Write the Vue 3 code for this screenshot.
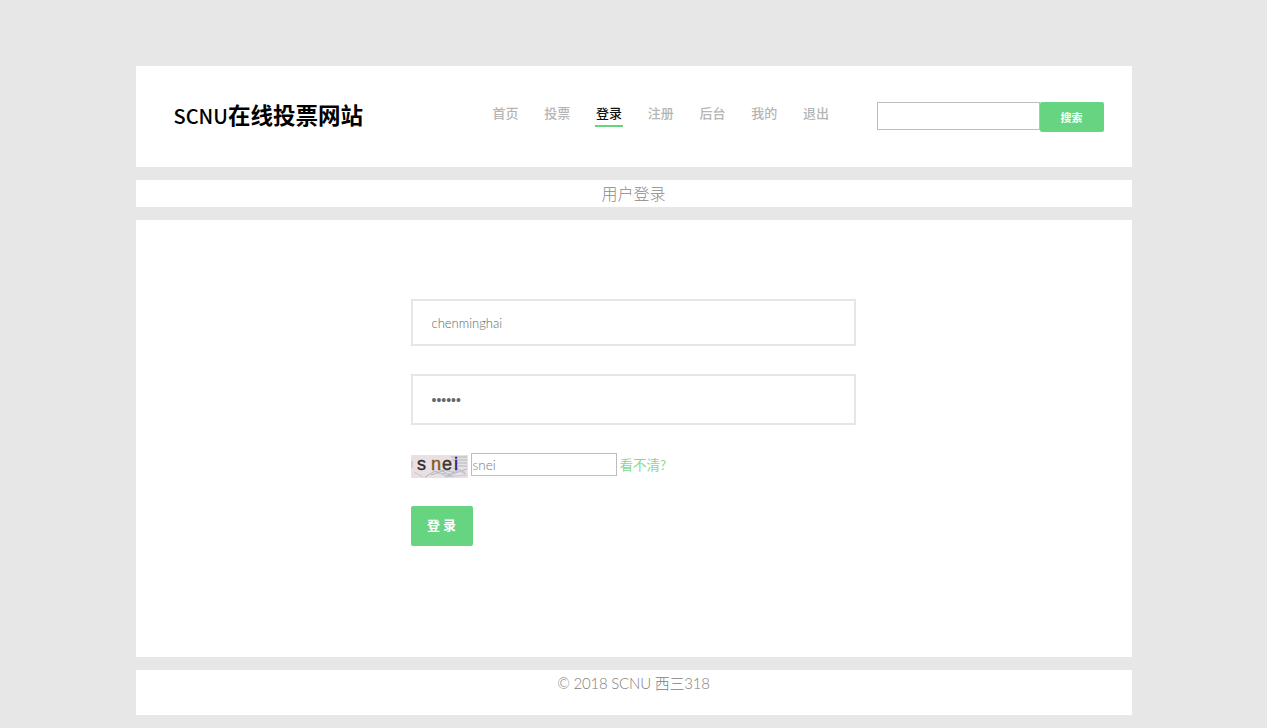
<template>
  <div class="page">
    <header class="panel top-bar">
      <h1 class="logo">SCNU<span>在线投票网站</span></h1>
      <nav class="nav">
        <a v-for="item in navItems" :key="item" :class="['nav-link', { active: item === '登录' }]">{{ item }}</a>
      </nav>
      <div class="search">
        <input class="search-input" type="text" />
        <button class="search-btn">搜索</button>
      </div>
    </header>

    <div class="panel title-bar">用户登录</div>

    <main class="panel login">
      <form class="login-form" @submit.prevent>
        <input class="field field-name" type="text" v-model="username" />
        <input class="field field-pass" type="password" v-model="password" />
        <div class="captcha-row">
          <svg class="captcha" width="57" height="23" viewBox="0 0 57 23">
            <rect width="57" height="23" fill="#eadfe3" />
            <path d="M1 6v7M40 2h16M41 5h15M44 8h12M47 11h9M20 20l14-5 10 3 12-4M14 22l10-6 12 5 8-3M28 14l14 8M46 13l8 6" stroke="#a3adb9" stroke-width="1" fill="none" opacity=".8" />
            <path d="M3 17l9 5M36 16l18 1M34 22l22-2M24 18l20 1M38 12l17 6" stroke="#c2cad3" stroke-width="1" fill="none" />
            <text x="6" y="15" class="cap-char" fill="#2b2b33" stroke="#2b2b33">s</text>
            <text x="20" y="15" class="cap-char" fill="#7a5a2c" stroke="#7a5a2c">n</text>
            <text x="31" y="15" class="cap-char" fill="#3b3a2e" stroke="#3b3a2e">e</text>
            <text x="43" y="15" class="cap-char" fill="#23266e" stroke="#23266e">i</text>
          </svg>
          <input class="captcha-input" type="text" v-model="captcha" />
          <a class="captcha-link">看不清?</a>
        </div>
        <button class="login-btn">登 录</button>
      </form>
    </main>

    <footer class="panel footer">© 2018 SCNU 西三318</footer>
  </div>
</template>

<script setup>
import { ref } from 'vue'

const navItems = ['首页', '投票', '登录', '注册', '后台', '我的', '退出']
const username = ref('chenminghai')
const password = ref('123456')
const captcha = ref('snei')
</script>

<style>
html,
body {
  margin: 0;
  background: #e7e7e7;
}
</style>

<style scoped>
.page {
  width: 996px;
  margin: 0 auto;
  padding: 66px 0 13px;
  display: flex;
  flex-direction: column;
  gap: 13px;
  font-family: Lato, "Noto Sans CJK SC", sans-serif;
  font-weight: 300;
  color: #777;
}

.panel {
  background: #fff;
}

.top-bar {
  height: 101px;
  box-sizing: border-box;
  padding: 0 28px 0 38px;
  display: flex;
  align-items: center;
}

.logo {
  margin: -3px 0 0;
  width: 319px;
  flex-shrink: 0;
  font-family: "Noto Sans CJK SC", sans-serif;
  font-size: 20px;
  font-weight: 500;
  line-height: 32px;
  color: #000;
}

.logo span {
  font-size: 22.5px;
  font-weight: 700;
}

.nav {
  display: flex;
  flex-shrink: 0;
  gap: 25.75px;
  margin-top: -3px;
}

.nav-link {
  font-family: "Noto Sans CJK SC", sans-serif;
  font-size: 13px;
  font-weight: 500;
  line-height: 18px;
  white-space: nowrap;
  padding-bottom: 3px;
  color: #b5b5b5;
  border-bottom: 2px solid transparent;
}

.nav-link.active {
  color: #111;
  padding: 0 1px 3px;
  margin: 0 -1px;
  border-bottom-color: #66d480;
}

.search {
  display: flex;
  align-items: flex-start;
  margin-left: auto;
}

.search-input {
  width: 163px;
  height: 28px;
  box-sizing: border-box;
  border: 1px solid #bdbdbd;
  padding: 0;
  outline: none;
}

.search-btn {
  width: 64px;
  height: 30px;
  border: none;
  border-radius: 2px;
  background: #66d480;
  color: #fff;
  font-family: "Noto Sans CJK SC", sans-serif;
  font-size: 11px;
  font-weight: 700;
  padding: 0;
}

.title-bar {
  height: 27px;
  line-height: 27px;
  text-align: center;
  font-size: 16px;
  color: #8a8a8a;
}

.login {
  height: 437px;
  box-sizing: border-box;
  padding: 79px 0 0 275px;
}

.login-form {
  width: 445px;
  display: flex;
  flex-direction: column;
  align-items: flex-start;
}

.field {
  width: 100%;
  box-sizing: border-box;
  border: 2px solid #e6e6e6;
  padding: 0 19px;
  outline: none;
  font-family: inherit;
  font-weight: 300;
  font-size: 13px;
  color: #666;
}

.field-name {
  height: 47px;
  margin-bottom: 28px;
}

.field-pass {
  height: 51px;
  margin-bottom: 28px;
  font-family: "Liberation Sans", sans-serif;
  font-size: 14px;
}

.captcha-row {
  display: flex;
  align-items: flex-start;
  height: 25px;
  margin-bottom: 28px;
}

.captcha {
  display: block;
  margin-top: 2px;
  flex-shrink: 0;
}

.cap-char {
  font-family: "Liberation Sans", sans-serif;
  font-size: 18px;
  font-weight: 400;
  stroke-width: 0.4px;
}

.captcha-input {
  width: 146px;
  height: 23px;
  margin-left: 3px;
  box-sizing: border-box;
  border: 1px solid #bdbdbd;
  padding: 0 1px;
  outline: none;
  font-family: inherit;
  font-weight: 300;
  font-size: 13.5px;
  color: #777;
}

.captcha-link {
  margin-left: 3px;
  font-size: 13.5px;
  font-weight: 400;
  line-height: 24px;
  color: #7fdc95;
}

.login-btn {
  width: 62px;
  height: 40px;
  border: none;
  border-radius: 2px;
  background: #66d480;
  color: #fff;
  font-family: "Noto Sans CJK SC", sans-serif;
  font-size: 13px;
  font-weight: 700;
  padding: 0 0 4px;
}

.footer {
  height: 45px;
  box-sizing: border-box;
  text-align: center;
  font-size: 15px;
  letter-spacing: -0.2px;
  line-height: 27px;
  color: #808080;
}
</style>
